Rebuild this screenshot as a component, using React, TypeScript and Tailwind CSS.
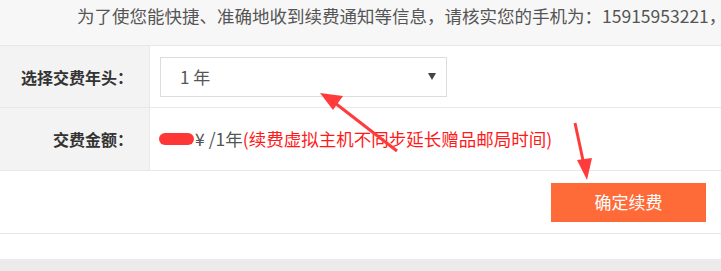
import React from 'react';

const font = { fontFamily: '"Microsoft YaHei", "Noto Sans CJK SC", "Noto Sans", sans-serif' };

export default function App() {
  return (
    <div className="relative w-[721px] h-[271px] overflow-hidden bg-white" style={font}>
      <div className="h-[46px] bg-[#f7f7f7] border-b border-[#e8e8e8] pl-[77px] text-[17.5px] leading-[32px] text-[#555] whitespace-nowrap">
        为了使您能快捷、准确地收到续费通知等信息，请核实您的手机为：15915953221，
      </div>

      <div className="flex h-[62px] border-b border-[#e8e8e8]">
        <div className="w-[150px] bg-[#f3f3f3] border-r border-[#e8e8e8] flex items-center justify-end pr-[16px] text-[16px] font-bold text-[#333]">
          选择交费年头：
        </div>
        <div className="flex items-center pl-[10px]">
          <div className="w-[287px] h-[40px] border border-[#dcdcdc] flex items-center justify-between pl-[19px] pr-[10px] text-[17px] text-[#555]">
            <span>1 年</span>
            <svg width="8" height="7" viewBox="0 0 8 7">
              <polygon points="0,0 8,0 4,7" fill="#444" />
            </svg>
          </div>
        </div>
      </div>

      <div className="flex h-[63px] border-b border-[#e8e8e8]">
        <div className="w-[150px] bg-[#f3f3f3] border-r border-[#e8e8e8] flex items-center justify-end pr-[16px] text-[16px] font-bold text-[#333]">
          交费金额：
        </div>
        <div className="flex items-center pl-[9px] text-[17.5px] whitespace-nowrap">
          <span className="inline-block w-[35px] h-[12px] rounded-full bg-[#ff3636] mr-[1px]" />
          <span className="text-[#555]">¥ /1年</span>
          <span className="text-[#ff1a1a]">(续费虚拟主机不同步延长赠品邮局时间)</span>
        </div>
      </div>

      <div className="flex h-[63px] border-b border-[#e8e8e8] items-center justify-end pr-[15px]">
        <button className="w-[155px] h-[39px] bg-[#ff6b38] text-white text-[17px]">确定续费</button>
      </div>

      <div className="h-[25px] bg-white" />
      <div className="h-[20px] bg-[#ebebeb]" />

      <svg className="absolute left-0 top-0 pointer-events-none" width="721" height="271">
        <line x1="397" y1="151" x2="335" y2="103" stroke="#ff3b3b" strokeWidth="3" />
        <polygon points="320,93 343,96 333,110" fill="#ff3b3b" />
        <line x1="575" y1="123" x2="584" y2="165" stroke="#ff3b3b" strokeWidth="3" />
        <polygon points="587,180 577,160 592,158" fill="#ff3b3b" />
      </svg>
    </div>
  );
}
